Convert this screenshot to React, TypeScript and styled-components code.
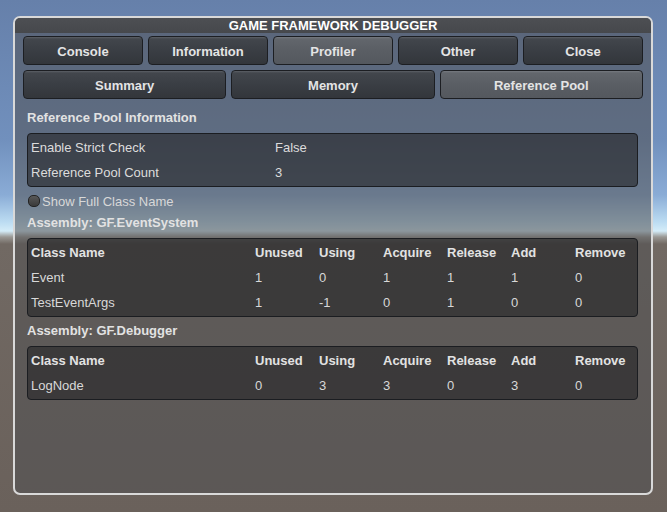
import styled, { createGlobalStyle } from 'styled-components'

const GlobalStyle = createGlobalStyle`
  html, body {
    margin: 0;
    padding: 0;
  }
  body {
    font-family: "Liberation Sans", Arial, sans-serif;
    background: linear-gradient(
      to bottom,
      #6680aa 0px,
      #7190bd 140px,
      #8aacd6 195px,
      #bcdcf2 222px,
      #d4ecf8 231px,
      #9a9894 237px,
      #716963 244px,
      #6a615b 512px
    );
    height: 512px;
    overflow: hidden;
  }
`

const mainTabs = ['Console', 'Information', 'Profiler', 'Other', 'Close']
const subTabs = ['Summary', 'Memory', 'Reference Pool']

const columns = ['Class Name', 'Unused', 'Using', 'Acquire', 'Release', 'Add', 'Remove']

const assemblies = [
  {
    name: 'GF.EventSystem',
    rows: [
      ['Event', '1', '0', '1', '1', '1', '0'],
      ['TestEventArgs', '1', '-1', '0', '1', '0', '0'],
    ],
  },
  {
    name: 'GF.Debugger',
    rows: [['LogNode', '0', '3', '3', '0', '3', '0']],
  },
]

const App = () => {
  return (
    <Page>
      <GlobalStyle />
      <DebugWindow>
        <TitleBar>GAME FRAMEWORK DEBUGGER</TitleBar>
        <Content>
          <ButtonRow $count={5}>
            {mainTabs.map((t) => (
              <TabButton key={t} $active={t === 'Profiler'}>
                {t}
              </TabButton>
            ))}
          </ButtonRow>
          <ButtonRow $count={3}>
            {subTabs.map((t) => (
              <TabButton key={t} $active={t === 'Reference Pool'}>
                {t}
              </TabButton>
            ))}
          </ButtonRow>

          <Heading $gap={4}>Reference Pool Information</Heading>
          <Panel>
            <InfoRow>
              <span>Enable Strict Check</span>
              <span>False</span>
            </InfoRow>
            <InfoRow>
              <span>Reference Pool Count</span>
              <span>3</span>
            </InfoRow>
          </Panel>

          <ToggleRow>
            <Toggle />
            <span>Show Full Class Name</span>
          </ToggleRow>

          {assemblies.map((a, i) => (
            <div key={a.name}>
              <Heading $gap={i === 0 ? 0 : 4}>Assembly: {a.name}</Heading>
              <Panel>
                <TableRow $header>
                  {columns.map((c) => (
                    <span key={c}>{c}</span>
                  ))}
                </TableRow>
                {a.rows.map((r) => (
                  <TableRow key={r[0]}>
                    {r.map((v, j) => (
                      <span key={j}>{v}</span>
                    ))}
                  </TableRow>
                ))}
              </Panel>
            </div>
          ))}
        </Content>
      </DebugWindow>
    </Page>
  )
}

const Page = styled.div`
  height: 512px;
  box-sizing: border-box;
  padding: 16px 14px 0 13px;
`

const DebugWindow = styled.div`
  width: 640px;
  height: 479px;
  box-sizing: border-box;
  border: 2px solid #d9d9d9;
  border-radius: 7px;
  background: rgba(80, 80, 82, 0.55);
  overflow: hidden;
  display: flex;
  flex-direction: column;
`

const TitleBar = styled.div`
  height: 15px;
  line-height: 15px;
  background: linear-gradient(to bottom, #4d4f53, #46484c);
  color: #ffffff;
  font-size: 13px;
  font-weight: bold;
  text-align: center;
  flex-shrink: 0;
`

const Content = styled.div`
  padding: 3px 8px 0 8px;
  display: flex;
  flex-direction: column;
  color: #dcdcdc;
  font-size: 13px;
`

const ButtonRow = styled.div<{ $count: number }>`
  display: grid;
  grid-template-columns: repeat(${(p) => p.$count}, 1fr);
  gap: 5px;
  margin-bottom: 5px;
`

const TabButton = styled.div<{ $active?: boolean }>`
  height: 29px;
  box-sizing: border-box;
  padding-top: 1px;
  border: 1px solid #1c1e22;
  border-radius: 4px;
  background: ${(p) =>
    p.$active
      ? 'linear-gradient(to bottom, #767a80 0px, #62666c 2px, #5a5e64 50%, #54585e 100%)'
      : 'linear-gradient(to bottom, #5c6066 0px, #42464c 2px, #3a3e44 50%, #33363b 100%)'};
  color: #e4e4e4;
  font-weight: bold;
  font-size: 13px;
  display: flex;
  align-items: center;
  justify-content: center;
`

const Heading = styled.div<{ $gap: number }>`
  height: 20px;
  line-height: 20px;
  padding-left: 4px;
  font-weight: bold;
  color: #e2e2e2;
  margin-top: ${(p) => p.$gap}px;
  margin-bottom: 5px;
`

const Panel = styled.div`
  margin: 0 5px 0 4px;
  border: 1px solid #1b1d21;
  border-radius: 4px;
  background: rgba(36, 36, 38, 0.6);
  padding: 1px 3px;
`

const InfoRow = styled.div`
  display: grid;
  grid-template-columns: 244px 1fr;
  height: 25px;
  align-items: center;
`

const TableRow = styled.div<{ $header?: boolean }>`
  display: grid;
  grid-template-columns: 224px repeat(5, 64px) 1fr;
  height: 25px;
  align-items: center;
  font-weight: ${(p) => (p.$header ? 'bold' : 'normal')};
  color: ${(p) => (p.$header ? '#e2e2e2' : '#d8d8d8')};
`

const ToggleRow = styled.div`
  height: 24px;
  margin-top: 2px;
  padding-left: 5px;
  display: flex;
  align-items: center;
  gap: 2px;
  color: #d8d8d8;
`

const Toggle = styled.div`
  width: 12px;
  height: 12px;
  box-sizing: border-box;
  border-radius: 5px;
  border: 1px solid #232323;
  background: linear-gradient(to bottom, #585858, #3a3a3a);
`

export default App
